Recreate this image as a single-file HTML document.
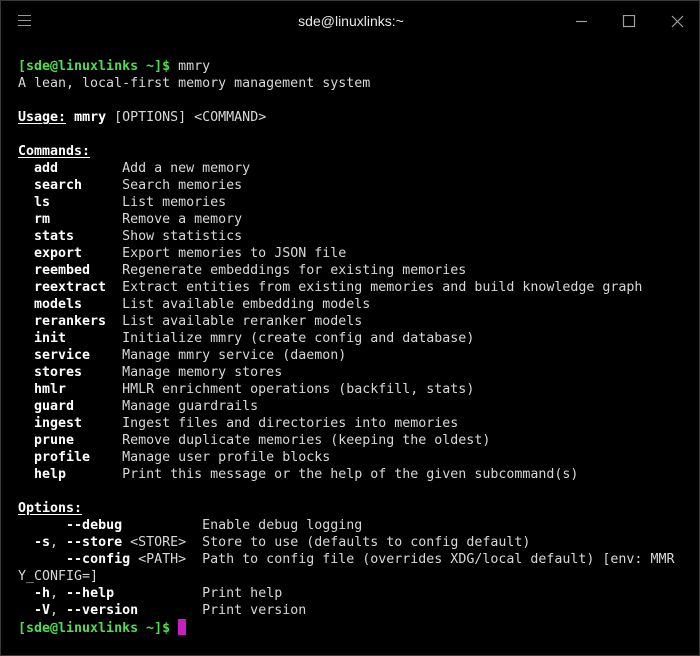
<!DOCTYPE html>
<html><head><style>
html,body{margin:0;padding:0;background:#000;}
body{width:700px;height:656px;position:relative;overflow:hidden;}
.frame{position:absolute;left:0;top:0;width:698px;height:654px;border:1px solid #3a3a3a;background:#000;}
.title{position:absolute;top:12px;left:0;width:700px;text-align:center;color:#e8e8e8;font:14px "Liberation Sans","DejaVu Sans",sans-serif;}
pre{position:absolute;left:18px;top:58px;margin:0;font-family:"DejaVu Sans Mono","Liberation Mono",monospace;font-size:13.3px;line-height:17px;color:#d8d8d8;white-space:pre;}
.g{color:#4fdc4f;font-weight:bold;}
b{color:#fff;font-weight:bold;}
u{text-underline-offset:2px;}
.cur{display:inline-block;width:8px;height:16px;background:#c71fc0;vertical-align:-3px;}
</style></head><body>
<div class="frame">
<svg style="position:absolute;left:17px;top:13px" width="14" height="13"><g stroke="#9a9a9a" stroke-width="1"><line x1="0" y1="1.5" x2="13" y2="1.5"/><line x1="0" y1="6.5" x2="13" y2="6.5"/><line x1="0" y1="11.5" x2="13" y2="11.5"/></g></svg>
<div class="title">sde@linuxlinks:~</div>
<svg style="position:absolute;left:573px;top:14px" width="115" height="14"><g stroke="#a0a0a0" stroke-width="1.2" fill="none"><line x1="2" y1="6.5" x2="13" y2="6.5"/><rect x="49.5" y="0.5" width="11" height="11"/><line x1="98" y1="1" x2="109" y2="12"/><line x1="109" y1="1" x2="98" y2="12"/></g></svg>
</div>
<pre><span class="g">[sde@linuxlinks ~]$</span> mmry
A lean, local-first memory management system

<b><u>Usage:</u></b> <b>mmry</b> [OPTIONS] &lt;COMMAND&gt;

<b><u>Commands:</u></b>
  <b>add</b>        Add a new memory
  <b>search</b>     Search memories
  <b>ls</b>         List memories
  <b>rm</b>         Remove a memory
  <b>stats</b>      Show statistics
  <b>export</b>     Export memories to JSON file
  <b>reembed</b>    Regenerate embeddings for existing memories
  <b>reextract</b>  Extract entities from existing memories and build knowledge graph
  <b>models</b>     List available embedding models
  <b>rerankers</b>  List available reranker models
  <b>init</b>       Initialize mmry (create config and database)
  <b>service</b>    Manage mmry service (daemon)
  <b>stores</b>     Manage memory stores
  <b>hmlr</b>       HMLR enrichment operations (backfill, stats)
  <b>guard</b>      Manage guardrails
  <b>ingest</b>     Ingest files and directories into memories
  <b>prune</b>      Remove duplicate memories (keeping the oldest)
  <b>profile</b>    Manage user profile blocks
  <b>help</b>       Print this message or the help of the given subcommand(s)

<b><u>Options:</u></b>
      <b>--debug</b>          Enable debug logging
  <b>-s</b>, <b>--store</b> &lt;STORE&gt;  Store to use (defaults to config default)
      <b>--config</b> &lt;PATH&gt;  Path to config file (overrides XDG/local default) [env: MMR
Y_CONFIG=]
  <b>-h</b>, <b>--help</b>           Print help
  <b>-V</b>, <b>--version</b>        Print version
<span class="g">[sde@linuxlinks ~]$</span> <span class="cur"></span></pre>
</body></html>
